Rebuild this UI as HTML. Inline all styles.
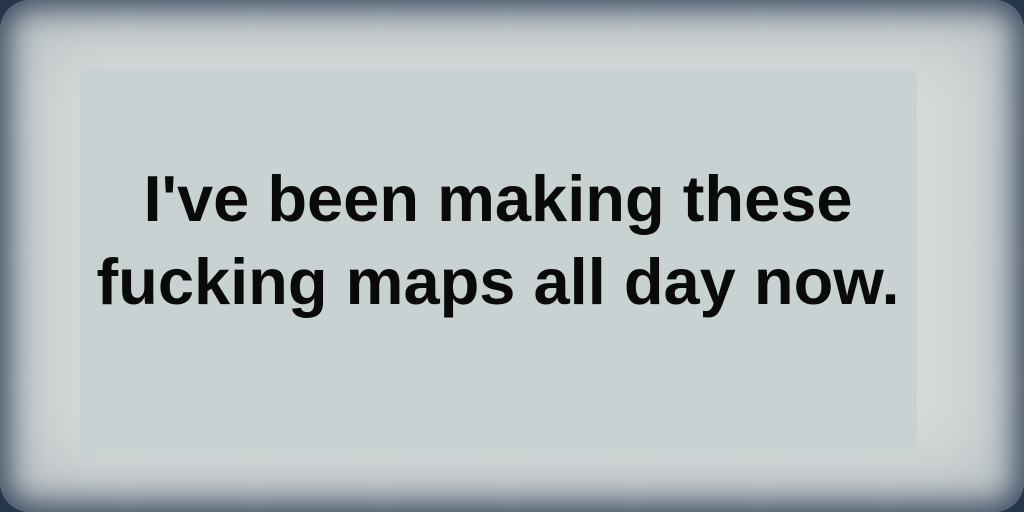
<!DOCTYPE html>
<html><head><style>
html,body{margin:0;padding:0;width:1024px;height:512px;overflow:hidden;background:#d3d7d7;}
.bgw{position:absolute;left:0;top:0;width:1024px;height:512px;background:#25364d;}
.in{position:absolute;left:0;top:0;width:1024px;height:512px;background:#d5d9d9;border-radius:30px;box-shadow:inset 0 0 30px 8px #3a4a60, inset 0 0 80px 18px rgba(90,105,120,0.35);}
.box{position:absolute;left:80px;top:69px;width:837px;height:385px;background:#c9d2d2;}
.t{position:absolute;left:0;width:1024px;text-align:center;font-family:"Liberation Sans",sans-serif;font-weight:bold;font-size:65px;color:#0a0a0a;line-height:83px;top:157px;margin-left:-14px;}
</style></head><body>
<div class="bgw"></div>
<div class="in"></div>
<div class="box"></div>
<div class="t">I've been making these<br>fucking maps all day now.</div>
</body></html>
